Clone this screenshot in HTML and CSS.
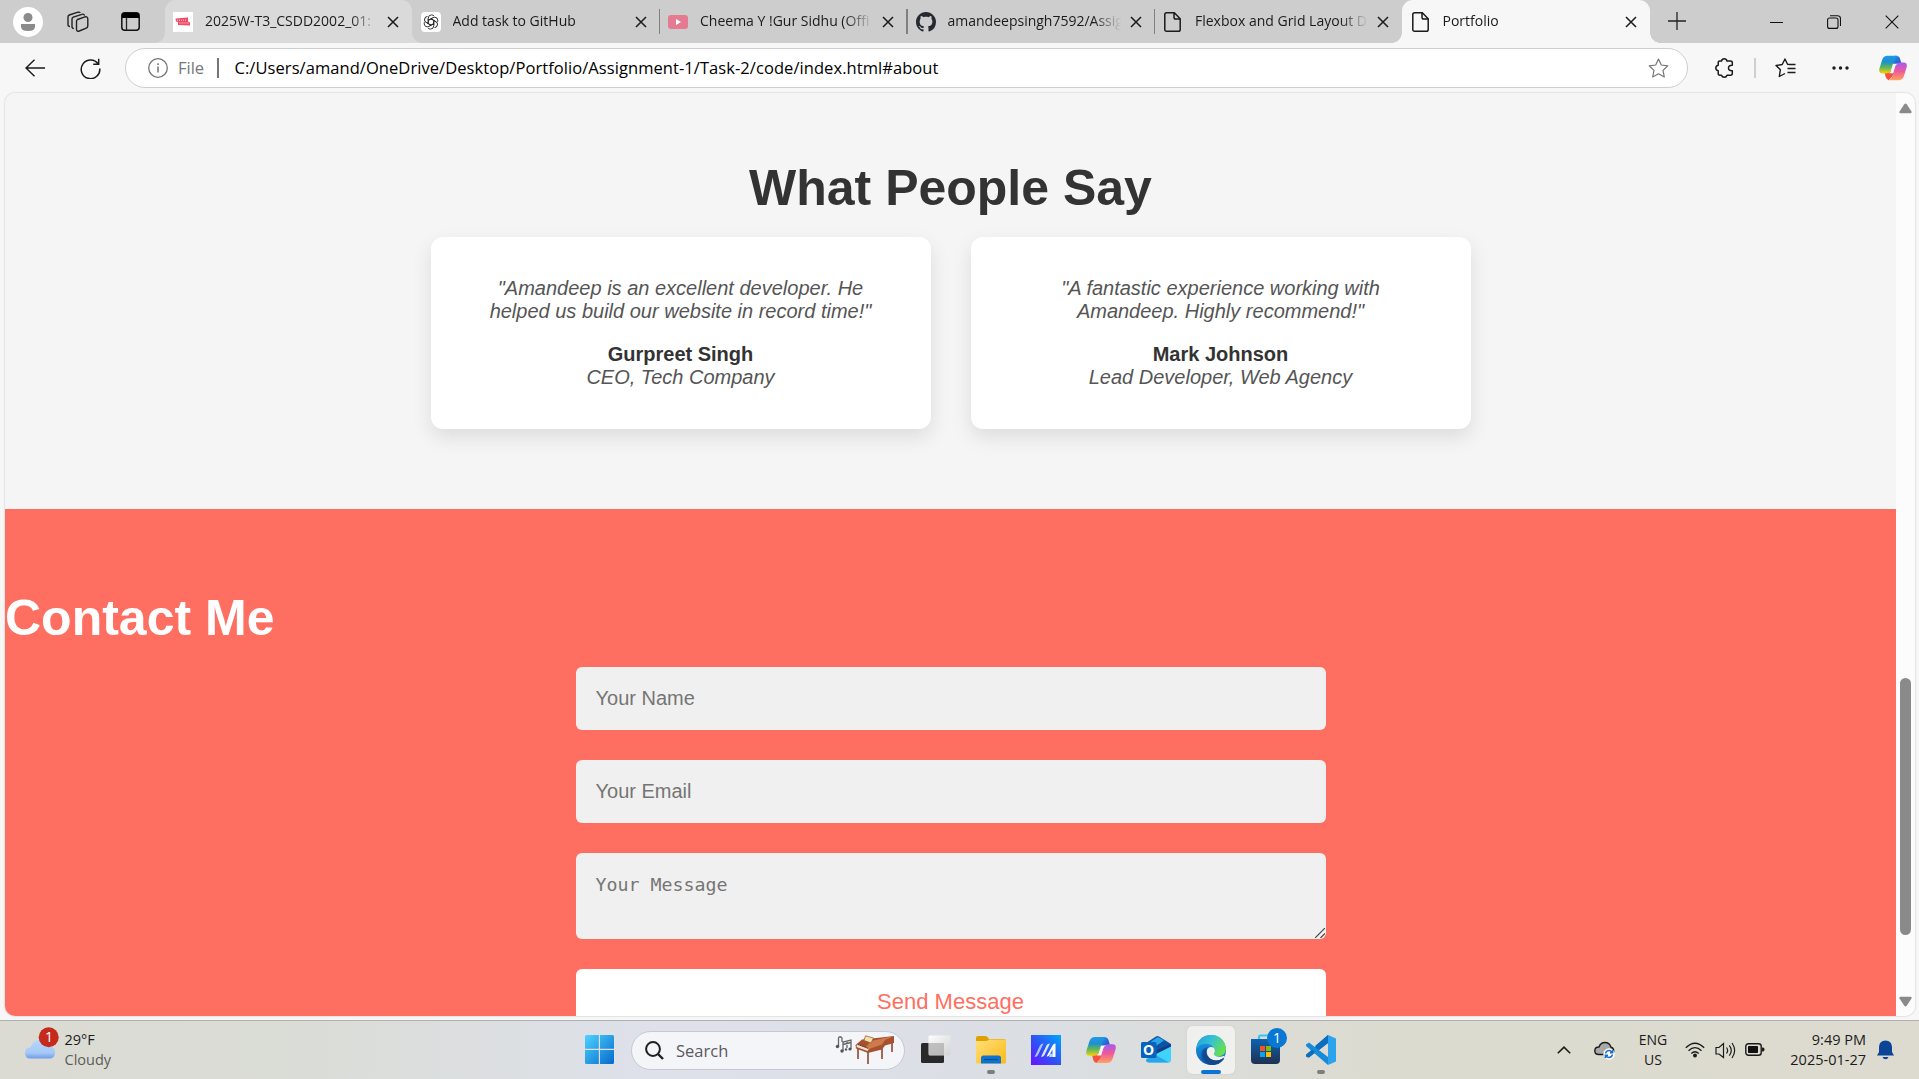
FILE: index.html
```html
<!DOCTYPE html>
<html lang="en">
<head>
<meta charset="utf-8">
<title>Portfolio</title>
<link rel="stylesheet" href="styles.css">
</head>
<body>
<svg class="defs" width="0" height="0" aria-hidden="true">
  <defs>
    <linearGradient id="cpA" x1="0" y1="0" x2="0" y2="1"><stop offset="0" stop-color="#1b9be8"/><stop offset=".35" stop-color="#1f8fd0"/><stop offset=".65" stop-color="#5fb857"/><stop offset="1" stop-color="#f5d20a"/></linearGradient>
    <linearGradient id="cpB" x1="0" y1="0" x2="0" y2="1"><stop offset="0" stop-color="#a55af2"/><stop offset=".5" stop-color="#ee5a9b"/><stop offset="1" stop-color="#ffa35c"/></linearGradient>
    <linearGradient id="cpC" x1="0" y1="0" x2="1" y2="1"><stop offset="0" stop-color="#2fa0ee"/><stop offset="1" stop-color="#1a3fc0"/></linearGradient>
    <linearGradient id="win" x1="0" y1="0" x2="1" y2="1"><stop offset="0" stop-color="#4fd3ff"/><stop offset="1" stop-color="#0669cc"/></linearGradient>
    <linearGradient id="fold" x1="0" y1="0" x2="1" y2="1"><stop offset="0" stop-color="#ffe07a"/><stop offset="1" stop-color="#fbb917"/></linearGradient>
    <linearGradient id="asus" x1="1" y1="0" x2="0" y2="1"><stop offset="0" stop-color="#00a8ff"/><stop offset=".5" stop-color="#2b55f6"/><stop offset="1" stop-color="#6a12ff"/></linearGradient>
    <linearGradient id="edgeTop" x1="0" y1="0" x2="1" y2=".5"><stop offset="0" stop-color="#1f9de0"/><stop offset=".5" stop-color="#35c1d6"/><stop offset="1" stop-color="#66e04f"/></linearGradient>
    <linearGradient id="edgeLeft" x1="0" y1="0" x2="0" y2="1"><stop offset="0" stop-color="#1ba2e6"/><stop offset="1" stop-color="#0f63bd"/></linearGradient>
    <linearGradient id="store" x1="0" y1="0" x2="0" y2="1"><stop offset="0" stop-color="#0d63b0"/><stop offset="1" stop-color="#1f3050"/></linearGradient>
    <linearGradient id="cloud" x1="0" y1="0" x2="0" y2="1"><stop offset="0" stop-color="#b6d5fb"/><stop offset=".7" stop-color="#a5c8f8"/><stop offset="1" stop-color="#6f9ae6"/></linearGradient>
    <linearGradient id="tvw" x1="0" y1="0" x2="1" y2="1"><stop offset="0" stop-color="#fff"/><stop offset="1" stop-color="#d2d2d2"/></linearGradient>
    <symbol id="x" viewBox="0 0 12 12"><path d="M1 1l10 10M11 1L1 11" fill="none" stroke="currentColor" stroke-width="1.5"/></symbol>
    <symbol id="file" viewBox="0 0 17 20"><path d="M3 .8h7.3l5.9 5.9V17.400q0 1.800-1.800 1.800H2.600Q.8 19.200.8 17.400V2.600Q.8.8 2.600.8zM10 1v4.200q0 1.800 1.800 1.800H16" fill="none" stroke="#1b1b1b" stroke-width="1.500"/></symbol>
    <symbol id="copilot" viewBox="0 0 30 28">
      <path d="M17 1q4.500-.3 5.500 3l1.500 5.500h-3q-3 0-4 3L14 8z" fill="url(#cpC)"/>
      <path d="M10.500 27q-2.500-.5-3.200-3L6 19h3q3 0 4-3l3 5z" fill="#f4523c"/>
      <path d="M9 1h11q-2.500.5-3.500 4L13 16q-1.200 3.800-5 3.800H3.500Q-.5 19.800.3 15L3.500 5Q5 1 9 1z" fill="url(#cpA)"/>
      <path d="M21 27H9.500q3.500-.5 4.500-4l3.200-11q1.200-3.800 5-3.800h4.300q4 0 3.200 4.800L26.500 23q-1.500 4-5.500 4z" fill="url(#cpB)"/>
      <path d="M15.200 9.500h5q-2.200.6-3 3.200L15 19.500h-4.500q2-.7 2.800-3.400z" fill="#f6f4f7"/>
    </symbol>
  </defs>
</svg>

<header class="tabbar">
  <div class="tab-tools">
    <span class="avatar"><svg width="30" height="30" viewBox="0 0 30 30"><circle cx="15" cy="15" r="15" fill="#fff"/><circle cx="15" cy="10.500" r="4.500" fill="#8b8b8b"/><path d="M8 17h14v2.500q0 4.500-7 4.500t-7-4.500z" fill="#8b8b8b"/></svg></span>
    <svg class="workspaces" width="22" height="22" viewBox="0 0 22 22" fill="none" stroke="#222" stroke-width="1.400"><path d="M10.500 8.500 18 5.800q2.500-.6 2.800 2v7q0 1.800-1.500 2.400L12.300 20q-2.600.8-2.800-1.500v-8q0-1.400 1-2zM6.800 17.500Q5 17.500 5 15.500V8.300q0-1.500 1.300-2.100L15 3.300M3 15.500q-2 0-2-2V6.100q0-1.500 1.300-2.100L11 1.200q1.500-.4 2.300.6"/><path d="M15 3.300q2-.6 2.600 1.300"/></svg>
    <svg width="19" height="19" viewBox="0 0 19 19"><rect x=".8" y=".8" width="17.400" height="17.400" rx="3" fill="none" stroke="#111" stroke-width="1.500"/><path d="M1 6V3q0-2 2-2h13q2 0 2 2v3z" fill="#000"/><path d="M5.500 6v12" stroke="#222" stroke-width="1.300"/></svg>
  </div>
  <nav class="tabs">
    <div class="tab hover"><span class="fav"><svg width="20" height="20" viewBox="0 0 20 20"><path fill="#fff" d="M0 0h20v20H0z"/><path d="M2.500 6.500 15 5.500v4l2 1v3l-12-.5V10l-2-.5z" fill="#f04a65"/><path d="M4 8.200h10M6.500 11h10" stroke="#fff" stroke-width=".8" stroke-dasharray="1 1"/></svg></span><span class="title">2025W-T3_CSDD2002_01:</span><svg class="close" width="12" height="12"><use href="#x"/></svg></div>
    <div class="tab"><span class="fav"><svg width="20" height="20" viewBox="0 0 20 20"><rect width="20" height="20" rx="4" fill="#fff"/><g fill="none" stroke="#222" stroke-width=".9"><path id="petal" d="M7.200 11.500V6.600q0-3.700 3.300-3.700 1.700 0 2.700 1.300M9.900 6.700l4.200 2.500"/><use href="#petal" transform="rotate(60 10 10)"/><use href="#petal" transform="rotate(120 10 10)"/><use href="#petal" transform="rotate(180 10 10)"/><use href="#petal" transform="rotate(240 10 10)"/><use href="#petal" transform="rotate(300 10 10)"/></g></svg></span><span class="title">Add task to GitHub</span><svg class="close" width="12" height="12"><use href="#x"/></svg></div>
    <div class="tab sep"><span class="fav"><svg width="20" height="20" viewBox="0 0 20 20"><rect y="3" width="20" height="14" rx="3" fill="#e57b90"/><path d="M8 7v6l5-3z" fill="#fff"/></svg></span><span class="title">Cheema Y !Gur Sidhu (Offi</span><svg class="close" width="12" height="12"><use href="#x"/></svg></div>
    <div class="tab sep"><span class="fav"><svg width="20" height="20" viewBox="0 0 16 16"><path fill="#24292f" d="M8 0C3.580 0 0 3.580 0 8c0 3.540 2.290 6.530 5.470 7.590.4.070.55-.17.55-.38 0-.19-.01-.82-.01-1.490-2.010.37-2.530-.49-2.690-.94-.09-.23-.48-.94-.82-1.130-.28-.15-.68-.52-.01-.53.63-.01 1.080.58 1.230.82.72 1.210 1.870.87 2.330.66.07-.52.28-.87.51-1.070-1.780-.2-3.640-.89-3.640-3.950 0-.87.31-1.590.82-2.150-.08-.2-.36-1.020.08-2.120 0 0 .67-.21 2.200.82.64-.18 1.320-.27 2-.27s1.360.09 2 .27c1.530-1.040 2.200-.82 2.200-.82.44 1.100.16 1.920.08 2.120.51.56.82 1.270.82 2.150 0 3.070-1.870 3.750-3.650 3.950.29.25.54.73.54 1.480 0 1.070-.01 1.930-.01 2.200 0 .21.15.46.55.38A8.010 8.010 0 0 0 16 8c0-4.420-3.580-8-8-8z"/></svg></span><span class="title">amandeepsingh7592/Assig</span><svg class="close" width="12" height="12"><use href="#x"/></svg></div>
    <div class="tab sep"><span class="fav"><svg width="17" height="20"><use href="#file"/></svg></span><span class="title">Flexbox and Grid Layout D</span><svg class="close" width="12" height="12"><use href="#x"/></svg></div>
    <div class="tab active"><span class="fav"><svg width="17" height="20"><use href="#file"/></svg></span><span class="title">Portfolio</span><svg class="close" width="12" height="12"><use href="#x"/></svg></div>
  </nav>
  <svg class="newtab" width="18" height="18" viewBox="0 0 18 18"><path d="M9 0v18M0 9h18" stroke="#222" stroke-width="1.300"/></svg>
  <div class="window-buttons">
    <svg width="13" height="14" viewBox="0 0 13 14"><path d="M0 7.500h13" stroke="#111"/></svg>
    <svg width="14" height="14" viewBox="0 0 14 14" fill="none" stroke="#111" stroke-width="1.100"><rect x=".6" y="3" width="10.400" height="10.400" rx="2"/><path d="M3 .7h7.500q3 0 3 3V11"/></svg>
    <svg width="14" height="14" viewBox="0 0 14 14"><path d="M.7.7l12.600 12.600M13.300.7.7 13.300" stroke="#111" stroke-width="1.100"/></svg>
  </div>
</header>

<div class="toolbar">
  <svg class="back" width="20" height="18" viewBox="0 0 20 18" fill="none" stroke="#1b1b1b" stroke-width="1.400"><path d="M9.500.7 1 9l8.500 8.300M1 9h19"/></svg>
  <svg class="reload" width="21" height="21" viewBox="0 0 21 21" fill="none" stroke="#1b1b1b" stroke-width="1.500"><path d="M18.300 6.200A9.300 9.300 0 1 0 19.800 10.500M18.700.8v5.500h-5.500"/></svg>
  <div class="address">
    <svg width="20" height="20" viewBox="0 0 20 20"><circle cx="10" cy="10" r="9.300" fill="none" stroke="#757575" stroke-width="1.300"/><path d="M10 8.500v6M10 5.300v1.700" stroke="#757575" stroke-width="1.500"/></svg>
    <span class="scheme">File</span><span class="bar"></span>
    <span class="url">C:/Users/amand/OneDrive/Desktop/Portfolio/Assignment-1/Task-2/code/index.html#about</span>
    <svg class="star" width="21" height="20" viewBox="0 0 21 20"><path d="M10.500 1 13.300 7l6.500.8-4.800 4.600 1.300 6.600-5.800-3.200L4.700 19 6 12.400 1.200 7.800 7.700 7z" fill="none" stroke="#767676" stroke-width="1.200" stroke-linejoin="round"/></svg>
  </div>
  <svg class="ext" width="19" height="20" viewBox="0 0 19 20" fill="none" stroke="#1b1b1b" stroke-width="1.500" stroke-linejoin="round"><path d="M6.500 3q.5-2.200 2.700-2.200T12 3h3.500q1.800 0 1.800 1.700v2.500q-3.800-.2-3.800 2.800t3.800 2.800v2.700q0 1.700-1.800 1.700H12q-.5 2-2.700 2T6.500 17.200H5q-1.800 0-1.800-1.700v-2.700Q.8 12.300.8 10t2.400-2.800V4.700Q3.200 3 5 3z"/></svg>
  <span class="tool-sep"></span>
  <svg class="favs" width="21" height="20" viewBox="0 0 21 20" fill="none" stroke="#1b1b1b" stroke-width="1.400" stroke-linejoin="round"><path d="M14.500 6.500 12.500 6.300 10 1 7.200 6.500 1 7.500l4.400 4.200L4.300 18.500 10 15.500M13.500 6.500H20.500M12.500 10.500h8M12.500 14.500h8"/></svg>
  <svg class="more" width="17" height="4" viewBox="0 0 17 4" fill="#1b1b1b"><circle cx="2" cy="2" r="1.700"/><circle cx="8.500" cy="2" r="1.700"/><circle cx="15" cy="2" r="1.700"/></svg>
  <svg class="cp" width="28" height="28"><use href="#copilot"/></svg>
</div>

<div class="viewport">
  <main class="page">
    <section class="testimonials">
      <h2>What People Say</h2>
      <div class="cards">
        <article class="card">
          <p>"Amandeep is an excellent developer. He helped us build our website in record time!"</p>
          <h4>Gurpreet Singh</h4>
          <p>CEO, Tech Company</p>
        </article>
        <article class="card">
          <p>"A fantastic experience working with Amandeep. Highly recommend!"</p>
          <h4>Mark Johnson</h4>
          <p>Lead Developer, Web Agency</p>
        </article>
      </div>
    </section>
    <section class="contact">
      <h2>Contact Me</h2>
      <form>
        <input type="text" placeholder="Your Name">
        <input type="email" placeholder="Your Email">
        <div class="message">
          <textarea rows="2" placeholder="Your Message"></textarea>
          <svg class="grip" width="10" height="10" viewBox="0 0 10 10"><path d="M0 10 10 0M5.500 10 10 5.500" stroke="#444" stroke-width="1.200"/></svg>
        </div>
        <button type="button">Send Message</button>
      </form>
    </section>
  </main>
  <div class="scrollbar">
    <svg width="13" height="11" viewBox="0 0 13 11"><path d="M5.300 1.300q1.200-1.500 2.400 0L12.500 8.500q.6 1.700-1 1.700H1.500q-1.600 0-1-1.700z" fill="#8a8a8a"/></svg>
    <span class="thumb"></span>
    <svg class="down" width="13" height="11" viewBox="0 0 13 11"><path d="M5.300 9.700q1.200 1.500 2.400 0L12.500 2.500q.6-1.700-1-1.700H1.500Q-.1.800.5 2.500z" fill="#8a8a8a"/></svg>
  </div>
</div>

<footer class="taskbar">
  <div class="weather">
    <svg width="36" height="34" viewBox="0 0 36 34"><path d="M6.500 31.500Q1 31.500 1 26t5.500-5.500Q9 13 16 13q7 0 9.500 6.500Q31 20 31 25.500t-5 6z" fill="url(#cloud)"/><circle cx="24.700" cy="10.300" r="10" fill="#c42b1c"/><text x="25" y="15.400" class="badge-num">1</text></svg>
    <div class="weather-text"><span>29°F</span><span class="cloudy">Cloudy</span></div>
  </div>
  <div class="apps">
    <span class="app"><svg width="29" height="29" viewBox="0 0 29 29"><path d="M1.500 0H13.800v13.800H0V1.500Q0 0 1.500 0zM15 0h12.500Q29 0 29 1.500v12.300H15zM0 15h13.800v14H1.500Q0 29 0 27.500zM15 15h14v12.500q0 1.500-1.500 1.500H15z" fill="url(#win)"/></svg></span>
    <div class="search">
      <svg width="19" height="19" viewBox="0 0 19 19" fill="none" stroke="#1f1f1f" stroke-width="2"><circle cx="8" cy="8" r="6.900"/><path d="m13 13 5 5" stroke-width="2.400"/></svg>
      <span>Search</span>
      <svg class="piano" width="60" height="30" viewBox="0 0 60 30">
        <g fill="none" stroke="#666" stroke-width="1.300"><path d="M3.500 12V3q1-2.500 3.500 0v4M8 16V7l8-2v9M8 9.500l8-2M12 13V7"/></g><g fill="#555"><circle cx="2.500" cy="11.500" r="1.700"/><circle cx="7" cy="16" r="1.700"/><circle cx="15" cy="14" r="1.600"/><circle cx="11" cy="14.500" r="1.200"/></g>
        <path d="M23 14v10M33 17v12M47 13v11M57 8v9" stroke="#843c25" stroke-width="1.500"/>
        <path d="M20.500 10 27 4.500 46 2.500 59 1v7l-9 2.500-3 4-14 3.500-12-4.500z" fill="#a9502f"/>
        <path d="M36 6 59 1 50 5l-3 4.500-13 4.500-3-2z" fill="#cd7b4c"/>
        <path d="m22 9.500 12 4.500-1.500 2-11-4z" fill="#eee0d0"/><path d="m23 9.500 10 3.800" stroke="#442920" stroke-dasharray="1 1"/>
        <path d="m30.500.8 8 2.200-2.500 5-7-2.500z" fill="#f3dfa8" stroke="#8d542e" stroke-width=".7"/>
      </svg>
    </div>
    <span class="app"><svg width="30" height="29" viewBox="0 0 30 29"><rect y="8" width="23" height="20" rx="1.500" fill="#292929"/><rect x="7.500" y=".5" width="22" height="20" rx="1.500" fill="url(#tvw)" opacity=".95"/><path d="M8 8h15v12H8z" fill="#aaa" opacity=".65"/></svg></span>
    <span class="app running"><svg width="30" height="28" viewBox="0 0 30 28"><path d="M0 2q0-2 2-2h7q1.500 0 2.500 1L13 3h15q2 0 2 2v4H0z" fill="#dfa100"/><path d="M0 5h10q1.500 0 2.500-1l.5-.5H29q1 0 1 1V26q0 1.500-1.500 1.500h-27Q0 27.500 0 26z" fill="url(#fold)"/><path d="M5 27.500V22q0-2.500 2.500-2.500h15Q25 19.500 25 22v5.500z" fill="#0c74ce"/><path d="M8 23.500h14" stroke="#0a4f96" stroke-width="1.200"/></svg></span>
    <span class="app"><svg width="30" height="30" viewBox="0 0 30 30"><path d="M0 0h30v30H0z" fill="url(#asus)"/><path d="M3.500 22 9 10.500q1-2 3.500-2L7 20q-1 2-3.500 2z" fill="#a9c6ff"/><path d="M10 22 15.500 10.500q1-2 3.500-2L13.500 20q-1 2-3.500 2z" fill="#dce9ff"/><path d="m15.500 21.500 6-11q1-2 3-2V22h-3v-7.500L18.500 20q-1 1.500-3 1.500z" fill="#fff"/><path d="M19 18.800h3V22h-4z" fill="#b5d4ff"/></svg></span>
    <span class="app"><svg width="30" height="28"><use href="#copilot"/></svg></span>
    <span class="app"><svg width="30" height="27" viewBox="0 0 30 27"><path d="m5 7 10-6.500q1.500-.8 3 0L30 8v6L15 20 5 12z" fill="#0d53a5"/><path d="m8 7 8-5.500q1-.6 2 0L23 4.500 12 12z" fill="#2aa5ea"/><path d="m14 15 16-7v5l-13 7z" fill="#103c80"/><path d="M5 23 30 10.500V24q0 2.500-2.500 2.500H8Q5 26.500 5 23z" fill="#3fd2fa"/><path d="m13 18 15 8.400H8Q5 26.400 5 24z" fill="#28a6e8"/><rect y="6" width="15.500" height="16" rx="1.500" fill="#0863bd"/><text x="7.700" y="19" class="outlook-o">O</text></svg></span>
    <span class="app current"><svg width="30" height="30" viewBox="0 0 30 30"><circle cx="15" cy="15" r="15" fill="url(#edgeLeft)"/><path d="M1 10Q4 0 15 0q8 0 12 5.500T29.500 16q-.8 5-6.500 5.300-3.700.2-5-1.300-.5-.7.400-2 1-2-.4-4.600-2.300-4.700-8-4.700Q4 8.700 1 13z" fill="url(#edgeTop)"/><path d="M10.500 15q-2 8.500 6 12.500 5 2 10-1.500-4.700 4.700-12 4Q5 28.500 5 20q0-6.500 7-8-1.300 1.500-1.500 3z" fill="#0c59ad"/><path d="M11 14q-1 9 6.500 11 5.500 1.200 10-2l.8.800Q24 30 15 30q-8-2.500-8-10 0-4 4-6z" fill="#114a8b"/><path d="M18.200 20q-.8-.8.200-2 1.200-2.200-.3-5-3.300-2-6 .3-2.500 3-.6 7.200 3.700 6 11 4.700 3.500-.7 5.400-2.700 1.100-1.500.2-1.700-2 1-4.500 1-4 0-5.400-1.800z" fill="#f1f1f0"/><path d="M11 15.500q-.8 7.500 6.500 9.700 5 1.200 10-2-4.500 4.800-10 3.500-7-2.200-6.500-11.200z" fill="#114a8b"/></svg></span>
    <span class="app"><svg class="storeicon" width="37" height="37" viewBox="0 0 37 37"><path d="M8 13V9q0-1.500 1.500-1.500H20" fill="none" stroke="#35c5f2" stroke-width="2.200"/><path d="M0 11h29v21q0 4-4 4H4q-4 0-4-4z" fill="url(#store)"/><path d="M9 18h5v5H9z" fill="#f35325"/><path d="M15 18h5v5h-5z" fill="#81bc06"/><path d="M9 24h5v5H9z" fill="#05a6f0"/><path d="M15 24h5v5h-5z" fill="#ffba08"/><circle cx="26" cy="10" r="10" fill="#0878d4"/><text x="26" y="15" class="badge-num">1</text></svg></span>
    <span class="app running"><svg width="30" height="30" viewBox="0 0 30 30"><path d="M22 0 30 3.500v23L22 30z" fill="#2ba3ef"/><path d="M0 20.500 22 0v8L3 22.500z" fill="#0b6fbd"/><path d="M0 9.500 3 7.500 22 22v8L0 11z" fill="#178bd9"/><path d="M22 0v8l-9 7-4-4zM0 19.500l6-5 3 2.500-6 5.500q-1.500.3-3-1z" fill="#0b6fbd"/></svg></span>
  </div>
  <div class="tray">
    <svg width="14" height="8" viewBox="0 0 14 8"><path d="m.8 7.200 6.200-6 6.200 6" fill="none" stroke="#1b1b1b" stroke-width="1.600"/></svg>
    <svg width="21" height="19" viewBox="0 0 21 19"><path d="M5 13.500Q.8 13.500.8 9.700T5 6Q6.500 1.500 11 1.500t6 4.700q2.700.5 2.700 4t-3.200 3.300z" fill="#a9a9a9" stroke="#1b1b1b" stroke-width="1.400"/><circle cx="15" cy="13" r="5.700" fill="#fff"/><path d="M11.500 12.500q.7-3 3.500-3 2 0 3.500 2M18.700 9v2.700H16M18.500 13.500q-.7 3-3.500 3-2 0-3.500-2M11.300 17v-2.700H14" fill="none" stroke="#1670c8" stroke-width="1.400"/></svg>
    <div class="lang"><span>ENG</span><span>US</span></div>
    <svg width="20" height="16" viewBox="0 0 20 16" fill="none" stroke="#1b1b1b" stroke-width="1.300"><path d="M.8 5.800q9.200-9 18.400 0M3.500 8.700q6.500-6.200 13 0M6.300 11.500q3.700-3.500 7.400 0"/><circle cx="10" cy="13.500" r="1.300" fill="#1b1b1b"/></svg>
    <svg width="21" height="17" viewBox="0 0 21 17" fill="none" stroke="#1b1b1b" stroke-width="1.200"><path d="M1 5.500h3l4.500-4v14L4 12H1zM11.500 5.500q2.300 3 0 6M14.300 3.300q4 5.200 0 10.400M17 1q5.300 7.500 0 15"/></svg>
    <svg width="20" height="14" viewBox="0 0 20 14"><rect x=".8" y=".8" width="15.400" height="11.400" rx="2.500" fill="none" stroke="#1b1b1b" stroke-width="1.400"/><path d="M3.500 3.500h9v6h-9z" fill="#111" stroke="#111"/><path d="M17 4.500h1q1.500 0 1.500 2t-1.500 2h-1z" fill="#1b1b1b"/></svg>
    <div class="clock"><span>9:49 PM</span><span>2025-01-27</span></div>
    <svg width="17" height="20" viewBox="0 0 17 20"><path d="M8.500.5q6.200 0 6.500 6.500v5l2 3.500H0L2 12V7Q2.300.5 8.500.5zM5.500 17h6q-.8 2.200-3 2.200t-3-2.200z" fill="#0a4596"/></svg>
  </div>
</footer>
</body>
</html>
```
FILE: styles.css
```css
* { box-sizing: border-box; }
body {
  margin: 0;
  width: 1919px;
  height: 1079px;
  overflow: hidden;
  display: flex;
  flex-direction: column;
  background: #f7f7f7;
  font-family: "Open Sans", "Noto Sans", sans-serif;
  font-size: 14px;
  color: #1b1b1b;
}
svg { display: block; flex: none; }
.defs { position: absolute; }

/* Tab strip */
.tabbar { display: flex; align-items: center; height: 43px; background: #cdcdcd; flex: none; }
.tab-tools { display: flex; align-items: center; width: 164.5px; padding-left: 13px; flex: none; }
.workspaces { margin: 0 32px 0 24px; }
.tabs { display: flex; height: 43px; }
.tab { position: relative; display: flex; align-items: center; width: 247.5px; padding: 1px 13px 0 8.500px; }
.fav { width: 32px; flex: none; display: flex; }
.tab .fav svg[width="17"] { margin-left: 1px; }
.title {
  width: 180px;
  white-space: nowrap;
  line-height: 22px;
  margin-top: -3px;
  -webkit-mask-image: linear-gradient(90deg, #000 145px, transparent 173px);
  mask-image: linear-gradient(90deg, #000 145px, transparent 173px);
}
.close { margin-left: auto; }
.hover { background: #dadada; border-radius: 11px 11px 0 0; }
.active { background: #f7f7f7; border-radius: 11px 11px 0 0; }
.hover::before, .hover::after, .active::before, .active::after {
  content: "";
  position: absolute;
  bottom: 0;
  width: 10px;
  height: 10px;
}
.hover::before, .active::before { left: -10px; }
.hover::after, .active::after { right: -10px; }
.hover::before { background: radial-gradient(circle at 0 0, transparent 9.500px, #dadada 10px); }
.hover::after { background: radial-gradient(circle at 100% 0, transparent 9.500px, #dadada 10px); }
.active::before { background: radial-gradient(circle at 0 0, transparent 9.500px, #f7f7f7 10px); }
.active::after { background: radial-gradient(circle at 100% 0, transparent 9.500px, #f7f7f7 10px); }
.sep::before { content: ""; position: absolute; left: -1px; top: 9px; width: 1.500px; height: 25px; background: #808080; }
.newtab { margin-left: 18px; margin-top: -2px; }
.window-buttons { display: flex; gap: 44px; margin-left: auto; padding-right: 20.500px; }

/* Toolbar */
.toolbar { display: flex; align-items: center; height: 50px; padding-left: 25px; flex: none; }
.back { margin: -1px 34.500px 0 0; }
.address {
  display: flex;
  align-items: center;
  width: 1563px;
  height: 40px;
  margin: 0 27px 0 24.500px;
  padding: 0 18px 0 22px;
  border: 1px solid #cfcfcf;
  border-radius: 20px;
  background: #fff;
}
.scheme { margin-left: 10px; margin-top: -1px; width: 29px; font-size: 16.500px; color: #767676; }
.bar { width: 1.500px; height: 20px; margin: 0 16px 0 10px; background: #777; }
.url { margin-top: -2px; font-size: 16.500px; letter-spacing: .065px; color: #000; white-space: nowrap; }
.star { margin-left: auto; }
.tool-sep { width: 2px; height: 20px; margin: 0 19px 0 20px; background: #cfcfcf; }
.more { margin: 0 30.500px 0 35.500px; }

/* Web page */
.viewport {
  display: flex;
  width: 1910px;
  height: 923px;
  margin-left: 5px;
  border-radius: 10px;
  overflow: hidden;
  flex: none;
  box-shadow: 0 0 2px rgba(0, 0, 0, .28);
}
.page { width: 1891px; font-family: "Liberation Sans", Arial, sans-serif; font-size: 20px; line-height: 23px; overflow: hidden; }
.page h2 { margin: 0 0 20px; font-size: 50px; line-height: 58px; }
.testimonials { height: 416px; padding-top: 66px; background: #f5f5f5; text-align: center; }
.testimonials h2 { color: #333; }
.cards { display: flex; justify-content: center; gap: 40px; }
.card { width: 500px; height: 192px; padding: 40px 50px; border-radius: 12px; background: #fff; box-shadow: 0 8px 20px rgba(0, 0, 0, .1); }
.card p { margin: 0; font-style: italic; color: #555; }
.card h4 { margin: 20px 0 0; font-size: 20px; color: #333; }
.contact { height: 507px; padding-top: 80px; background: #ff6f61; }
.contact h2 { color: #fff; }
form { display: flex; flex-direction: column; gap: 30px; width: 750px; margin: 0 auto; }
input, textarea, button { display: block; width: 100%; border: 0; border-radius: 6px; padding: 20px; font: 20px/23px "Liberation Sans", Arial, sans-serif; background: #f0f0f0; }
input { height: 63px; }
input::placeholder, textarea::placeholder { color: #757575; }
.message { position: relative; }
textarea { height: 86px; resize: none; overflow: hidden; font: 18.270px/23px "DejaVu Sans Mono", monospace; }
.grip { position: absolute; right: 1px; bottom: 1px; }
button { height: 64px; background: #fff; color: #ff6f61; font-size: 22px; }
.scrollbar { width: 19px; background: #fcfcfc; display: flex; flex-direction: column; align-items: center; padding: 10px 0 9px; }
.thumb { width: 11px; height: 257px; margin-top: 564px; border-radius: 6px; background: #8a8a8a; }
.down { margin-top: auto; }

/* Taskbar */
.taskbar {
  display: flex;
  height: 59px;
  margin-top: 4px;
  border-top: 1px solid #b0b0ae;
  background: linear-gradient(90deg, #dbdbd3 0, #dadcd6 15%, #dee1ea 34%, #dbdfe4 54%, #dcdbd0 72%, #dddbd0 100%);
}
.weather { display: flex; width: 572px; padding: 6px 0 0 24px; flex: none; }
.weather-text { display: flex; flex-direction: column; margin-left: 4.500px; padding-top: 3px; font-size: 14.500px; line-height: 20px; }
.cloudy { color: #5c5c58; }
.badge-num { font: 14px "Open Sans", sans-serif; fill: #fff; text-anchor: middle; }
.outlook-o { font: bold 14px "Open Sans", sans-serif; fill: #fff; text-anchor: middle; }
.apps { display: flex; align-items: center; flex: none; }
.app { position: relative; width: 55px; height: 58px; padding-bottom: 1px; display: flex; align-items: center; justify-content: center; }
.search {
  display: flex;
  align-items: center;
  width: 274px;
  height: 39px;
  margin: 0 3.500px 0 4px;
  padding: 0 9px 0 13px;
  border: 1px solid #c6c8d2;
  border-radius: 20px;
  background: #f4f5f9;
  font-size: 16.500px;
  color: #5a5a5a;
}
.search span { margin-left: 12px; }
.piano { margin-left: auto; }
.current::before { content: ""; position: absolute; left: 3px; top: 5px; width: 48px; height: 48px; border-radius: 5px; background: #f0f0ee; box-shadow: 0 0 1px #aaa; }
.current svg { position: relative; left: -.5px; }
.running::after, .current::after { content: ""; position: absolute; bottom: 5px; left: 23.500px; width: 8px; height: 4px; border-radius: 2px; background: #7d7d7a; }
.current::after { left: 17.500px; width: 20px; background: #0c75d2; }
.storeicon { margin: -7px -6px 0 0; }
.tray {
  display: grid;
  grid-template-columns: 40px 40px 56px 30px 30px 30px 96px 38px;
  align-items: center;
  justify-items: center;
  margin-left: auto;
  padding-right: 15px;
  font-size: 14.500px;
  line-height: 20px;
}
.lang, .clock { display: flex; flex-direction: column; align-items: center; }
.lang { padding-left: 2px; font-size: 14px; }
.clock { align-items: flex-end; justify-self: end; }
```
